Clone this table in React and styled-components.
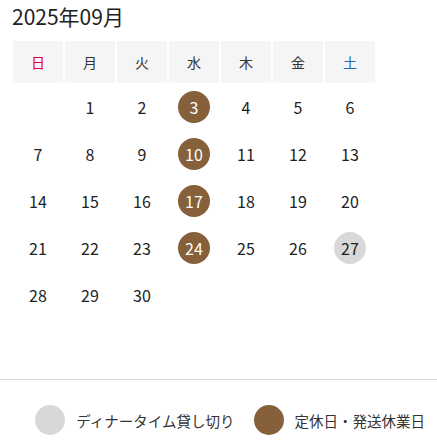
import React from "react";
import styled, { createGlobalStyle } from "styled-components";

const Global = createGlobalStyle`
  html, body { margin: 0; padding: 0; background: #fff; }
  body { font-family: "Noto Sans CJK JP", "Noto Sans", sans-serif; color: #222; }
`;

const Page = styled.div`
  width: 437px;
  display: flex;
  flex-direction: column;
`;

const Top = styled.div`
  padding: 0 13px;
`;

const Title = styled.h2`
  margin: 0 0 0 -1px;
  font-weight: 400;
  font-size: 21px;
  line-height: 32px;
  height: 41px;
  color: #222;
`;

const Grid = styled.div`
  display: grid;
  grid-template-columns: repeat(7, 50px);
  column-gap: 2px;
`;

const HeadCell = styled.div`
  height: 42px;
  background: #f5f5f5;
  display: flex;
  align-items: center;
  justify-content: center;
  font-size: 14px;
  color: ${(p) => (p.$tone === "sun" ? "#e0003a" : p.$tone === "sat" ? "#1e6db4" : "#333")};
`;

const DayCell = styled.div`
  height: 47px;
  display: flex;
  align-items: center;
  justify-content: center;
`;

const Num = styled.span`
  width: 32px;
  height: 32px;
  border-radius: 50%;
  display: flex;
  align-items: center;
  justify-content: center;
  font-size: 16px;
  background: ${(p) => (p.$kind === "closed" ? "#85603a" : p.$kind === "dinner" ? "#d8d8d8" : "transparent")};
  color: ${(p) => (p.$kind === "closed" ? "#fff" : "#222")};
`;

const Divider = styled.hr`
  margin: 61px 0 0;
  border: 0;
  border-top: 1px solid #d9d9d9;
  width: 100%;
`;

const Legend = styled.div`
  display: flex;
  justify-content: flex-end;
  align-items: center;
  padding: 25px 12px 0 0;
  gap: 19px;
`;

const LegendItem = styled.div`
  display: flex;
  align-items: center;
  gap: 11px;
  font-size: 14.5px;
  color: #333;
`;

const Dot = styled.span`
  width: 30px;
  height: 30px;
  border-radius: 50%;
  background: ${(p) => p.$color};
`;

const heads = [
  { t: "日", tone: "sun" },
  { t: "月" },
  { t: "火" },
  { t: "水" },
  { t: "木" },
  { t: "金" },
  { t: "土", tone: "sat" },
];

const closed = new Set([3, 10, 17, 24]);
const dinner = new Set([27]);

export default function App() {
  const cells = [];
  const offset = 1;
  for (let i = 0; i < offset; i++) cells.push(null);
  for (let d = 1; d <= 30; d++) cells.push(d);
  while (cells.length % 7) cells.push(null);

  return (
    <>
      <Global />
      <Page>
        <Top>
          <Title>2025年09月</Title>
          <Grid>
            {heads.map((h) => (
              <HeadCell key={h.t} $tone={h.tone}>{h.t}</HeadCell>
            ))}
            {cells.map((d, i) => (
              <DayCell key={i}>
                {d && (
                  <Num $kind={closed.has(d) ? "closed" : dinner.has(d) ? "dinner" : ""}>{d}</Num>
                )}
              </DayCell>
            ))}
          </Grid>
        </Top>
        <Divider />
        <Legend>
          <LegendItem>
            <Dot $color="#d8d8d8" />
            ディナータイム貸し切り
          </LegendItem>
          <LegendItem>
            <Dot $color="#85603a" />
            定休日・発送休業日
          </LegendItem>
        </Legend>
      </Page>
    </>
  );
}
